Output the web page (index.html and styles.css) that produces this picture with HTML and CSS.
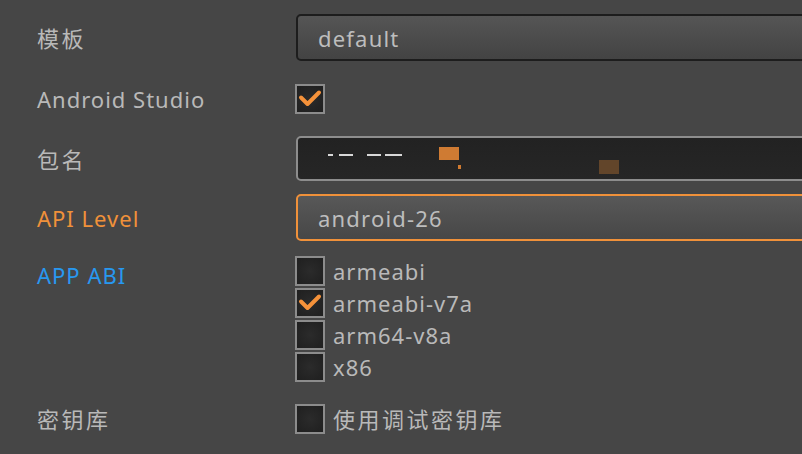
FILE: index.html
```html
<!DOCTYPE html>
<html lang="zh">
<head>
<meta charset="utf-8">
<link rel="stylesheet" href="styles.css">
</head>
<body>
<div class="form">
  <div class="row r-template">
    <div class="label cjk">模板</div>
    <div class="field field-select"><span class="value">default</span></div>
  </div>
  <div class="row r-studio">
    <div class="label">Android Studio</div>
    <div class="checks">
      <label class="check on"><span class="box"><svg viewBox="0 0 30 30"><polyline points="6,13.5 12.5,20 24,8.5"/></svg></span></label>
    </div>
  </div>
  <div class="row r-package">
    <div class="label cjk">包名</div>
    <div class="field field-input">
      <span class="mark m1"></span><span class="mark m2"></span><span class="mark m3"></span><span class="mark m4"></span>
      <span class="blk b1"></span><span class="blk b2"></span><span class="blk b3"></span>
    </div>
  </div>
  <div class="row r-api">
    <div class="label label-orange">API Level</div>
    <div class="field field-select focus"><span class="value">android-26</span></div>
  </div>
  <div class="row r-abi">
    <div class="label label-blue">APP ABI</div>
    <div class="checks list">
      <label class="check"><span class="box"></span><span class="text">armeabi</span></label>
      <label class="check on"><span class="box"><svg viewBox="0 0 30 30"><polyline points="6,13.5 12.5,20 24,8.5"/></svg></span><span class="text">armeabi-v7a</span></label>
      <label class="check"><span class="box"></span><span class="text">arm64-v8a</span></label>
      <label class="check"><span class="box"></span><span class="text">x86</span></label>
    </div>
  </div>
  <div class="row r-keystore">
    <div class="label cjk">密钥库</div>
    <div class="checks">
      <label class="check"><span class="box"></span><span class="text cjk">使用调试密钥库</span></label>
    </div>
  </div>
</div>
</body>
</html>
```
FILE: styles.css
```css
html, body {
  margin: 0;
  padding: 0;
  background: #464646;
  overflow: hidden;
}
body {
  width: 802px;
  height: 454px;
  font-family: "Noto Sans", "Noto Sans CJK SC", sans-serif;
  font-size: 22px;
  letter-spacing: 1px;
  color: #b9b9b9;
}
.form {
  padding: 14px 0 0 37px;
  display: flex;
  flex-direction: column;
}
.row {
  display: grid;
  grid-template-columns: 259px 560px;
  align-items: center;
}
.r-studio { margin-top: 23px; }
.r-package { margin-top: 22px; }
.r-api { margin-top: 13px; }
.r-abi { margin-top: 15px; align-items: start; }
.r-keystore { margin-top: 22px; }
.label {
  line-height: 28px;
  height: 28px;
  white-space: nowrap;
}
.cjk { letter-spacing: 2.5px; }
.r-abi .label { padding-top: 5px; }
.label-orange { color: #f0913a; }
.label-blue { color: #2898f0; }
.field {
  position: relative;
  box-sizing: border-box;
  height: 47px;
  border-radius: 5px;
  border: 2px solid #1d1d1d;
  display: flex;
  align-items: center;
  padding-left: 20px;
}
.field-select {
  background: linear-gradient(#555555, #434343);
}
.field-select.focus {
  border-color: #f0913a;
  background: linear-gradient(#585858, #474747);
}
.field-input {
  height: 45px;
  border-color: #8d8d8d;
  background: linear-gradient(#222222, #262626);
}
.value { color: #bdbdbd; letter-spacing: 1.2px; }
.mark {
  position: absolute;
  top: 16px;
  height: 2px;
  background: #d8d8d8;
}
.m1 { left: 30px; width: 5px; }
.m2 { left: 41px; width: 14px; }
.m3 { left: 69px; width: 14px; }
.m4 { left: 87px; width: 17px; }
.blk { position: absolute; }
.b1 { left: 141px; top: 9px; width: 20px; height: 13px; background: #cf7b33; }
.b2 { left: 160px; top: 27px; width: 3px; height: 4px; background: #d07a30; }
.b3 { left: 301px; top: 22px; width: 20px; height: 14px; background: #62452a; }
.checks { display: flex; flex-direction: column; }
.list { gap: 2px; }
.check {
  display: flex;
  align-items: center;
  gap: 8px;
  height: 30px;
}
.box {
  box-sizing: border-box;
  width: 30px;
  height: 30px;
  border: 2px solid #8c8c8c;
  background: radial-gradient(circle, #2b2b2b, #1f1f1f);
  display: block;
  margin-left: -1px;
  flex: none;
}
.box svg {
  display: block;
  width: 30px;
  height: 30px;
  margin: -2px;
}
.box polyline {
  fill: none;
  stroke: #f5923a;
  stroke-width: 4;
  stroke-linecap: round;
  stroke-linejoin: round;
}
.text { color: #b9b9b9; line-height: 30px; white-space: nowrap; }
.text.cjk { letter-spacing: 2.5px; }
```
